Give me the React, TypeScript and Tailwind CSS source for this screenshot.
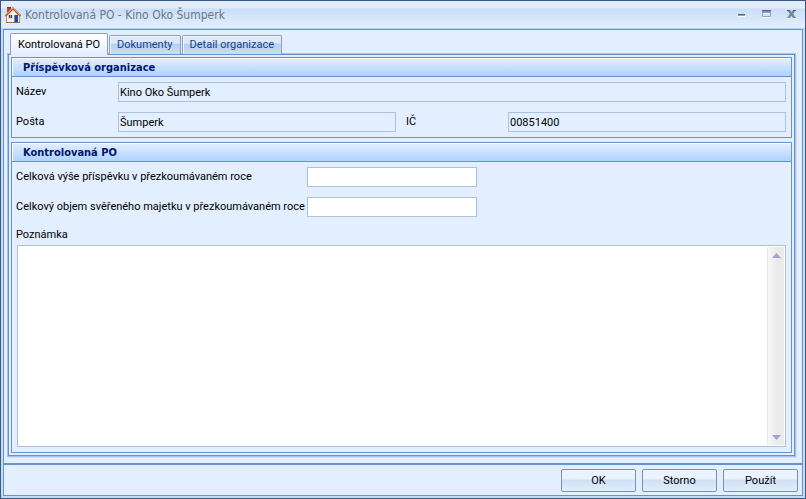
import { useState } from "react";
import type { ReactNode } from "react";

const TABS = ["Kontrolovaná PO", "Dokumenty", "Detail organizace"];

function HouseIcon() {
  return (
    <svg width="16" height="16" viewBox="0 0 16 16" aria-hidden="true">
      <path d="M2 0h4v6H2z" fill="#b5482c" />
      <path d="M2 0h4v1H2z" fill="#8a2f1c" />
      <path d="M2 7.500 8 1.500 14 7.500V15.500H2Z" fill="#fdf3e6" />
      <path d="M1.500 8.500V15.500H14.500V8.500" fill="none" stroke="#c58e68" />
      <path d="M0.500 9 8 1.500 15.500 9" fill="none" stroke="#a9583a" strokeWidth="2" />
      <path d="M0.500 8 8 0.800 15.500 8" fill="none" stroke="#efb48c" />
      <path d="M3 8h5v4H3z" fill="#e6d3bd" />
      <path d="M4 8h3v3H4z" fill="#34435f" />
      <path d="M5 8h1v3H5z" fill="#8d9bb4" />
      <path d="M9 8h4v7H9z" fill="#1d4c9c" />
      <path d="M9 8h1v7H9z" fill="#5c86c8" />
      <path d="M1 15h14v1H1z" fill="#9c6c4c" />
    </svg>
  );
}

function Panel({ title, grow, children }: { title: string; grow?: boolean; children: ReactNode }) {
  return (
    <section className={"flex flex-col border border-[#6593cf] " + (grow ? "flex-1" : "")}>
      <h2 className="h-[19px] border-b border-[#6593cf] bg-linear-to-b from-[#e3efff] to-[#afd2ff] pl-[11px] font-['DejaVu_Sans_Condensed','DejaVu_Sans',sans-serif] text-[11px] leading-5 font-bold text-[#00156e] shadow-[inset_1px_1px_0_#fff]">
        {title}
      </h2>
      <div className="flex flex-1 flex-col py-[5px] pr-[5px] pl-1">{children}</div>
    </section>
  );
}

function ReadOnlyField({ id, label, value }: { id: string; label: string; value: string }) {
  return (
    <div className="flex items-center">
      <label htmlFor={id} className="w-[102px] shrink-0">{label}</label>
      <input id={id} readOnly value={value} className="h-5 min-w-0 flex-1 border border-[#abc1de] bg-[#e3efff] px-px outline-none" />
    </div>
  );
}

function AmountField({ id, label }: { id: string; label: string }) {
  const [value, setValue] = useState("");
  return (
    <div className="flex items-center">
      <label htmlFor={id} className="w-[291px] shrink-0 whitespace-nowrap">{label}</label>
      <input id={id} value={value} onChange={(e) => setValue(e.target.value)} className="h-5 w-[170px] border border-[#abc1de] bg-white px-px outline-none" />
    </div>
  );
}

export default function App() {
  const [activeTab, setActiveTab] = useState(0);
  const [note, setNote] = useState("");

  return (
    <div className="flex min-h-screen flex-col border border-[#3b5a82] bg-[#c6daf3] px-0.5 pb-0.5 font-[Roboto,sans-serif] text-[11px] leading-4 text-black">
      <header className="-mx-0.5 flex h-7 items-center border-b border-[#b4d0f5] bg-linear-to-b from-[#e3ecfa] from-25% via-[#cadef7] via-30% to-[#e4effd] pl-1">
        <HouseIcon />
        <h1 className="ml-1 flex-1 font-['DejaVu_Sans_Condensed','DejaVu_Sans',sans-serif] text-[12px] leading-4 text-[#6b7687]">
          Kontrolovaná PO - Kino Oko Šumperk
        </h1>
        <div className="flex pr-px">
          <button aria-label="Minimalizovat" className="flex h-5 w-[25px] items-center justify-center">
            <svg width="9" height="9" viewBox="0 0 9 9">
              <path d="M1 4h7v1H1z" fill="#5d6570" />
              <path d="M1 5h7v1H1z" fill="#8fa3bf" />
              <path d="M1 6h7v1H1z" fill="#fff" />
            </svg>
          </button>
          <button aria-label="Maximalizovat" className="flex h-5 w-[25px] items-center justify-center">
            <svg width="9" height="9" viewBox="0 0 9 9">
              <path d="M0 0h9v1H0z" fill="#5d6570" />
              <path d="M0 1h9v2H0z" fill="#8094b3" />
              <path d="M.5 2.500v4h8v-4" fill="none" stroke="#8fa3bf" />
              <path d="M1 3h7v1H1zM0 7h9v1H0z" fill="#fff" />
            </svg>
          </button>
          <button aria-label="Zavřít" className="flex h-5 w-[25px] items-center justify-center">
            <svg width="9" height="9" viewBox="0 0 9 9">
              <path d="M0 8h3v1H0zM6 8h3v1H6z" fill="#fff" />
              <path d="M0 0h3l1.500 2L6 0h3L6.200 4 9 8H6L4.500 5.700 3 8H0l2.800-4z" fill="#7088a8" />
              <path d="M0 0h3v1H0zM6 0h3v1H6z" fill="#5d6570" />
            </svg>
          </button>
        </div>
      </header>

      <main className="flex flex-1 flex-col border border-[#6593cf] bg-[#e3efff]">
        <div className="flex flex-1 flex-col pt-[3px] pr-[7px] pb-[7px] pl-1">
          <div role="tablist" className="relative z-10 -mb-px flex items-end gap-px pl-0.5">
            {TABS.map((tab, i) => (
              <button
                key={tab}
                role="tab"
                aria-selected={i === activeTab}
                onClick={() => setActiveTab(i)}
                className={
                  i === activeTab
                    ? "h-[22px] rounded-t-xs border border-b-0 border-[#8f9fc4] bg-linear-to-b from-white to-[#e3efff] px-[7px] text-black"
                    : "mb-px h-[19px] rounded-t-xs border border-b-0 border-[#8f9fc4] bg-linear-to-b from-[#dbe9fb] from-40% via-[#b4cfef] via-45% to-[#cbdff7] px-[7px] text-[#15428b] shadow-[inset_1px_1px_0_#eef5fe]"
                }
              >
                {tab}
              </button>
            ))}
          </div>

          <div className="flex flex-1 flex-col gap-1 border border-[#6593cf] p-0.5 shadow-[0_0_0_1px_#a9c1e6,1px_1px_1px_#7f97c4]">
            <Panel title="Příspěvková organizace">
              <div className="flex flex-col gap-2.5">
                <ReadOnlyField id="nazev" label="Název" value="Kino Oko Šumperk" />
                <div className="grid grid-cols-2 gap-2.5">
                  <ReadOnlyField id="posta" label="Pošta" value="Šumperk" />
                  <ReadOnlyField id="ic" label="IČ" value="00851400" />
                </div>
              </div>
            </Panel>

            <Panel title="Kontrolovaná PO" grow>
              <div className="flex flex-col gap-2.5">
                <AmountField id="prispevek" label="Celková výše příspěvku v přezkoumávaném roce" />
                <AmountField id="majetek" label="Celkový objem svěřeného majetku v přezkoumávaném roce" />
              </div>
              <label htmlFor="poznamka" className="mt-2.5 mb-0.5">Poznámka</label>
              <div className="ml-px flex flex-1 border border-[#abc1de] bg-white">
                <textarea id="poznamka" value={note} onChange={(e) => setNote(e.target.value)} className="flex-1 resize-none p-0.5 outline-none" />
                <div className="my-px mr-px flex w-[17px] flex-col justify-between border-l border-[#e6e6e6] bg-linear-to-r from-[#f8f8f8] to-[#ebebeb] to-50%">
                  <button aria-label="Nahoru" className="flex h-4 items-center justify-center">
                    <svg width="9" height="5" viewBox="0 0 9 5"><path d="M4.500 0 9 5H0z" fill="#9aa8cc" /></svg>
                  </button>
                  <button aria-label="Dolů" className="flex h-4 items-center justify-center">
                    <svg width="9" height="5" viewBox="0 0 9 5"><path d="M0 0h9L4.500 5z" fill="#9aa8cc" /></svg>
                  </button>
                </div>
              </div>
            </Panel>
          </div>
        </div>

        <footer className="flex justify-end gap-1.5 border-t-2 border-[#6593cf] px-1 pt-1 pb-[3px]">
          {["OK", "Storno", "Použít"].map((name) => (
            <button key={name} className="h-[23px] w-[75px] rounded-xs border border-[#7793b9] bg-linear-to-b from-[#eaf3fe] from-40% via-[#d0e0f4] via-50% to-[#e2eefc]">
              {name}
            </button>
          ))}
        </footer>
      </main>
    </div>
  );
}
